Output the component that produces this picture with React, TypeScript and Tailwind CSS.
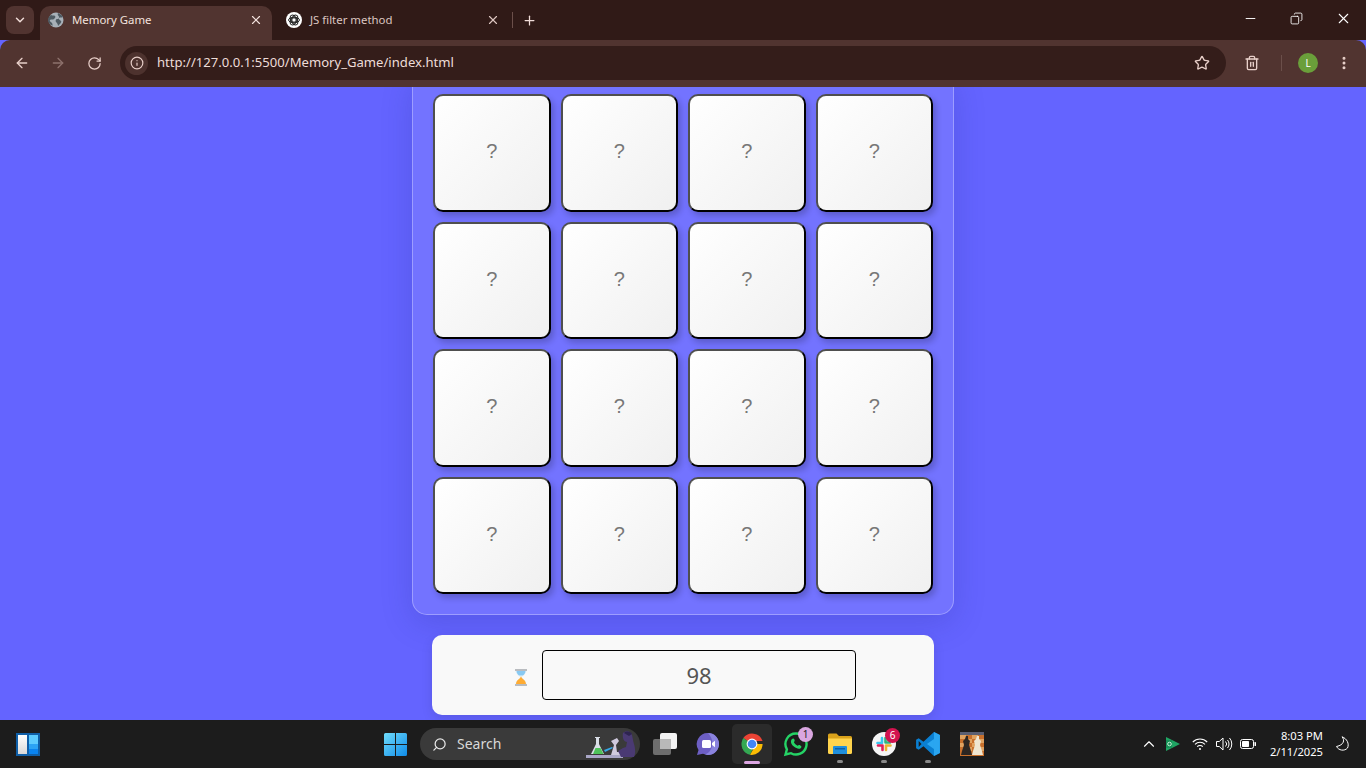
import { ArrowLeft, ArrowRight, ChevronDown, ChevronUp, Copy, Ellipsis, Info, Minus, Plus, RotateCw, Search, Star, Trash2, X } from "lucide-react";

const rows = [0, 1, 2, 3];
const cols = [0, 1, 2, 3];

function Card() {
  return (
    <div className="aspect-square rounded-[10px] border-2 border-[#4f4f4f] border-r-black border-b-black bg-linear-to-br from-white to-[#f0f0f0] shadow-[3px_4px_6px_rgba(0,0,0,0.2)] flex items-center justify-center pb-[3px] text-[20px] text-[#777] font-['Liberation_Sans',sans-serif]">
      ?
    </div>
  );
}

function GlobeIcon() {
  return (
    <svg width="16" height="16" viewBox="0 0 16 16">
      <circle cx="8" cy="8" r="7.5" fill="#a7b0b8" />
      <path d="M3 3c2 1 3 0 4 1s0 2-1 3-3 0-4 1 1 2 2 3 0 3 1 3c-3-1-5-3-5-6 0-2 1-4 3-5zM10 1c2 1 4 2 5 4-2 1-3 0-4 1s1 2 2 3-1 3-3 5c0-2-1-3-2-4s0-3 1-3 2 0 2-2-2-1-1-4z" fill="#4e5a62" />
    </svg>
  );
}

function OpenAiIcon() {
  return (
    <svg width="16" height="16" viewBox="0 0 16 16">
      <circle cx="8" cy="8" r="8" fill="#fff" />
      <g fill="none" stroke="#222" strokeWidth="1">
        <circle cx="8" cy="8" r="2.2" />
        <ellipse cx="8" cy="8" rx="5.4" ry="2.8" />
        <ellipse cx="8" cy="8" rx="5.4" ry="2.8" transform="rotate(60 8 8)" />
        <ellipse cx="8" cy="8" rx="5.4" ry="2.8" transform="rotate(120 8 8)" />
      </g>
    </svg>
  );
}

function Hourglass() {
  return (
    <svg width="14" height="17" viewBox="0 0 14 17">
      <path d="M1.500 1h11c0 4.500-3.500 5.500-4.500 7.500 1 2 4.500 3 4.500 7.500h-11c0-4.500 3.500-5.500 4.500-7.500C5 6.500 1.500 5.500 1.500 1z" fill="#e6f3fb" />
      <path d="M2.500 2h9c0 2.500-1.500 3.500-2.500 4.500H5C4 5.500 2.500 4.500 2.500 2z" fill="#88c9f2" />
      <path d="M7 7c.4 3 4.800 3.500 5 8H2c.2-4.500 4.600-5 5-8z" fill="#ffac33" />
      <path d="M1 0h12v2H1zM1 15h12v2H1z" fill="#b9bcc0" />
    </svg>
  );
}

function WinLogo() {
  return (
    <svg width="23" height="23" viewBox="0 0 23 23">
      <defs>
        <linearGradient id="w" x1="0" y1="0" x2="1" y2="1">
          <stop offset="0" stopColor="#6fdcfb" />
          <stop offset="1" stopColor="#0f8be8" />
        </linearGradient>
      </defs>
      <path d="M0 1.500A1.500 1.500 0 0 1 1.500 0H11v11H0zM12 0h9.500A1.500 1.500 0 0 1 23 1.500V11H12zM0 12h11v11H1.500A1.500 1.500 0 0 1 0 21.500zM12 12h11v9.500a1.500 1.500 0 0 1-1.500 1.500H12z" fill="url(#w)" />
    </svg>
  );
}

function Scientist() {
  return (
    <svg width="54" height="32" viewBox="0 0 54 32">
      <path d="M1 27h37v3H1z" fill="#a9a6c6" />
      <path d="M10 9h5v1h-1v6l5 10H6l5-10v-6h-1z" fill="#d9dde6" />
      <path d="M8 26l2.500-6h5l3 6z" fill="#4ec25a" />
      <path d="M19 22l8-3 1 1-8 4z" fill="#35a8e8" />
      <path d="M26 13l6-3 2 3-3 4 1 7h3v3h-9l3-10z" fill="#cfc9dd" />
      <path d="M38 5c3-3 8-2 9 2s1 6 2 9 2 9 0 13H36l-3-6 5-3 3-1 1-5c-3 0-5-4-4-9z" fill="#4a3a73" />
      <path d="M39 5c2-2 6-2 8 1l-3 2z" fill="#2e2450" />
    </svg>
  );
}

function TaskView() {
  return (
    <svg width="26" height="24" viewBox="0 0 26 24">
      <rect x="1" y="7" width="18" height="16" rx="2" fill="#6d6d6d" />
      <rect x="8" y="1" width="17" height="16" rx="2" fill="#f4f4f4" />
      <rect x="8" y="7" width="11" height="10" fill="#b9b9b9" />
    </svg>
  );
}

function MeetIcon() {
  return (
    <svg width="24" height="24" viewBox="0 0 24 24">
      <path d="M12 1a11 11 0 1 1-5 20.800L1 23l1.500-5A11 11 0 0 1 12 1z" fill="#6d5fc4" />
      <path d="M12 1a11 11 0 0 1 0 22 11 11 0 0 1-3-.4C16 20 20 10 12 1z" fill="#8a83de" />
      <rect x="6" y="8" width="9" height="8" rx="1.500" fill="#fff" />
      <path d="M16 11l3-2.200v6.400L16 13z" fill="#fff" />
    </svg>
  );
}

function ChromeIcon() {
  return (
    <svg width="24" height="24" viewBox="0 0 24 24">
      <path d="M12 12L3.300 6A11 11 0 0 1 22.600 9H12z" fill="#ea4335" />
      <path d="M12 12L3.300 6A11 11 0 0 0 10 22.800l4-8z" fill="#34a853" />
      <path d="M12 12h10.600A11 11 0 0 1 10 22.800l5-8.500z" fill="#fbbc04" />
      <circle cx="12" cy="12" r="5.400" fill="#fff" />
      <circle cx="12" cy="12" r="4.300" fill="#4285f4" />
    </svg>
  );
}

function WhatsAppIcon() {
  return (
    <svg width="26" height="26" viewBox="0 0 26 26">
      <path d="M13 2.500a10.500 10.500 0 1 1-5 19.700L2.500 23.500l1.400-5.200A10.500 10.500 0 0 1 13 2.500z" fill="none" stroke="#25d366" strokeWidth="2.400" />
      <path d="M9 8c1-1 2-.6 2.400.6.500 1.200.300 1.700-.5 2.700.8 1.500 2 2.700 3.700 3.500 1-.9 1.500-1.100 2.700-.4 1.200.6 1.500 1.500.6 2.500-1.600 1.600-4.300.9-7-1.300C8 13.600 7 10 9 8z" fill="#25d366" />
    </svg>
  );
}

function FolderIcon() {
  return (
    <svg width="24" height="22" viewBox="0 0 24 22">
      <path d="M0 2a1.500 1.500 0 0 1 1.500-1.500h7L11 3h11.500A1.500 1.500 0 0 1 24 4.500V8H0z" fill="#d9a21b" />
      <path d="M0 5.500h24v14a1.500 1.500 0 0 1-1.500 1.500h-21A1.500 1.500 0 0 1 0 19.500z" fill="#ffd44d" />
      <path d="M5 14a1 1 0 0 1 1-1h12a1 1 0 0 1 1 1v7H5z" fill="#1f8fdc" />
      <path d="M7 15h10v1.500H7z" fill="#0b5fa8" />
    </svg>
  );
}

function SlackIcon() {
  return (
    <svg width="24" height="24" viewBox="0 0 24 24">
      <circle cx="12" cy="12" r="12" fill="#f5f5f5" />
      <g strokeWidth="2.600" strokeLinecap="round">
        <path d="M10 6v5M5.500 11H10" stroke="#36c5f0" />
        <path d="M18 10.500h-4.500M13.500 6v4.500" stroke="#2eb67d" />
        <path d="M14 18v-4.500M18.500 13.500H14" stroke="#ecb22e" />
        <path d="M6 13.500h4.500M10.500 13.500V18" stroke="#e01e5a" />
      </g>
    </svg>
  );
}

function VsCodeIcon() {
  return (
    <svg width="26" height="26" viewBox="0 0 24 24">
      <path d="M17.500 1L23 3.600v16.800L17.500 23 7.800 14l-4.400 3.400L1 16V8l2.400-1.400L7.800 10z" fill="#0a7fd1" />
      <path d="M17.500 1L23 3.600v16.800L17.500 23zM17.500 7.300L11 12l6.500 4.700z" fill="#2aa6f0" />
      <path d="M3.400 9.200L6 12l-2.600 2.800z" fill="#1c1c1c" />
    </svg>
  );
}

function ChessThumb() {
  return (
    <svg width="24" height="24" viewBox="0 0 24 24">
      <rect width="24" height="24" fill="#c8702c" />
      <path d="M0 3h6v4H0zM12 3h6v4h-6zM6 7h6v4H6zM18 7h6v4h-6zM0 11h6v4H0zM12 11h6v4h-6zM6 15h6v4H6zM18 15h6v4h-6z" fill="#e0a260" />
      <path d="M0 0h24v3H0z" fill="#5b5f72" />
      <path d="M6 4h2v3l2 2-1 4 2 6 1 4H1l1-4 2-6-1-4 2-2z" fill="#2c2622" />
      <path d="M17 4h2v3l2 2-1 4 2 6 1 4H12l1-4 2-6-1-4 2-2z" fill="#efe6d2" />
    </svg>
  );
}

function WifiIcon() {
  return (
    <svg width="16" height="14" viewBox="0 0 16 14" fill="none" stroke="#fff" strokeWidth="1.100">
      <path d="M.8 5a10 10 0 0 1 14.400 0M3 7.400a7 7 0 0 1 10 0M5.200 9.700a4 4 0 0 1 5.600 0" />
      <circle cx="8" cy="12" r="1" fill="#fff" stroke="none" />
    </svg>
  );
}

function VolumeIcon() {
  return (
    <svg width="17" height="14" viewBox="0 0 17 14" fill="none" stroke="#fff" strokeWidth="1">
      <path d="M.5 4.500h2.800L7 1v12L3.300 9.500H.5z" />
      <path d="M9.500 4.500a3.500 3.500 0 0 1 0 5M11.500 3a6 6 0 0 1 0 8M13.500 1a9 9 0 0 1 0 12" />
    </svg>
  );
}

function BatteryIcon() {
  return (
    <svg width="16" height="10" viewBox="0 0 16 10">
      <rect x=".5" y=".5" width="13" height="9" rx="2" fill="none" stroke="#fff" />
      <rect x="2" y="2" width="7" height="6" rx=".8" fill="#fff" />
      <rect x="14.500" y="3" width="1.500" height="4" rx=".6" fill="#fff" />
    </svg>
  );
}

function MoonIcon() {
  return (
    <svg width="14" height="16" viewBox="0 0 14 16" fill="none" stroke="#fff" strokeWidth="1">
      <path d="M7 .8C10 4 9 9 1.500 10.500c2 4 8 5 11 1.500C14.500 8 12 2.500 7 .8z" />
    </svg>
  );
}

function TrayPlay() {
  return (
    <svg width="14" height="14" viewBox="0 0 14 14">
      <path d="M0 0l14 7-14 7z" fill="#1fa463" />
      <rect x="0" y="3" width="6" height="8" fill="#169056" />
      <circle cx="3.500" cy="7" r="1.800" fill="none" stroke="#c9f2d8" />
    </svg>
  );
}

function Badge({ text, color, textColor }: { text: string; color: string; textColor: string }) {
  return (
    <span className={`absolute -top-[4px] -right-[4px] w-[15px] h-[15px] rounded-full ${color} ${textColor} text-[10px] leading-[15px] text-center`}>
      {text}
    </span>
  );
}

export default function App() {
  return (
    <div className="w-[1366px] h-[768px] overflow-hidden flex flex-col bg-[#6464ff] font-['Noto_Sans',sans-serif]">
      <div className="h-[40px] shrink-0 bg-[#301a17] flex items-end pl-[6px]">
        <div className="mb-[6px] w-[28px] h-[28px] rounded-lg bg-[#513430] flex items-center justify-center text-[#f0dcd8]">
          <ChevronDown size={14} strokeWidth={2.5} />
        </div>
        <div className="ml-[6px] w-[232px] h-[34px] rounded-t-[10px] bg-[#513430] flex items-center pl-[8px] pr-[9px] pb-[6px] text-[#f3e2de]">
          <GlobeIcon />
          <span className="ml-[8px] text-[11.4px]">Memory Game</span>
          <X size={14} className="ml-auto" />
        </div>
        <div className="w-[240px] h-[34px] flex items-center pl-[14px] pr-[12px] pb-[6px] text-[#dcc6c1]">
          <OpenAiIcon />
          <span className="ml-[8px] text-[11.4px]">JS filter method</span>
          <X size={14} className="ml-auto" />
        </div>
        <div className="mb-[12px] w-px h-[16px] bg-[#6b4f4a]" />
        <Plus size={15} strokeWidth={2} className="mb-[12px] ml-[9px] text-[#f0dcd8]" />
        <div className="ml-auto mb-[13px] flex items-center text-white">
          <Minus size={15} strokeWidth={1.5} className="mr-[32px]" />
          <Copy size={13} strokeWidth={1.6} className="mr-[32px] -scale-x-100" />
          <X size={17} strokeWidth={1.5} className="mr-[14px]" />
        </div>
      </div>

      <div className="h-[47px] shrink-0 bg-[#513430] rounded-t-[10px] flex items-center px-[14px] pb-[1px] text-[#e8cfc9]">
        <ArrowLeft size={16} />
        <ArrowRight size={16} className="ml-[20px] text-[#8d716c]" />
        <RotateCw size={15} className="ml-[21px]" />
        <div className="ml-[18px] w-[1106px] h-[34px] rounded-full bg-[#341d1a] flex items-center pl-[5px] pr-[16px]">
          <span className="w-[23px] h-[23px] rounded-full bg-[#4d322e] flex items-center justify-center">
            <Info size={14} />
          </span>
          <span className="ml-[9px] text-[13.1px] text-[#eddcd8]">http://127.0.0.1:5500/Memory_Game/index.html</span>
          <Star size={16} className="ml-auto" />
        </div>
        <Trash2 size={16} className="ml-[18px]" />
        <div className="ml-[21px] w-px h-[16px] bg-[#6b4f4a]" />
        <span className="ml-[16px] w-[20px] h-[20px] rounded-full bg-[#6a9f3a] text-white text-[10px] flex items-center justify-center">L</span>
        <Ellipsis size={16} strokeWidth={2.5} className="ml-[18px] rotate-90" />
      </div>

      <main className="flex-1 min-h-0 overflow-hidden flex flex-col items-center justify-end pb-[5px]">
        <div className="shrink-0 w-[542px] p-[20px] rounded-[15px] border border-white/30 bg-white/10 shadow-[0_8px_32px_rgba(31,38,135,0.2)]">
          <div className="grid grid-cols-4 gap-[10px]">
            {rows.map((r) => cols.map((c) => <Card key={`${r}-${c}`} />))}
          </div>
        </div>
        <div className="shrink-0 mt-[20px] w-[502px] h-[80px] rounded-[10px] bg-[#f9f9f9] shadow-[0_4px_12px_rgba(0,0,0,0.1)] flex items-center justify-center gap-[14px] pl-[4px]">
          <span className="mt-[4px]">
            <Hourglass />
          </span>
          <div className="w-[314px] h-[50px] rounded-[4px] border border-black flex items-center justify-center text-[22px] text-[#555]">
            98
          </div>
        </div>
      </main>

      <footer className="h-[48px] shrink-0 bg-[#1c1c1c] flex items-center text-white">
        <div className="ml-[16px] w-[24px] h-[23px] bg-[#0f5fa8] p-[2px] flex gap-[2px]">
          <div className="w-[9px] bg-linear-to-b from-white to-[#d8d8d8]" />
          <div className="flex-1 flex flex-col">
            <div className="flex-1 bg-[#5ccbff]" />
            <div className="h-[5px] bg-[#2ba3f5]" />
            <div className="h-[5px] bg-[#0a84f0]" />
          </div>
        </div>
        <div className="ml-[344px]">
          <WinLogo />
        </div>
        <div className="ml-[13px] w-[220px] h-[32px] rounded-full bg-[#3a3a3a] flex items-center pl-[12px]">
          <Search size={15} className="-scale-x-100 text-[#e8e8e8]" />
          <span className="ml-[10px] mb-[2px] text-[14px] text-[#d8d8d8]">Search</span>
          <span className="ml-auto mr-[1px] h-[32px]">
            <Scientist />
          </span>
        </div>
        <div className="ml-[12px]">
          <TaskView />
        </div>
        <div className="ml-[18px]">
          <MeetIcon />
        </div>
        <div className="ml-[12px] relative w-[40px] h-[40px] rounded-[5px] bg-[#2b2b2b] flex items-center justify-center">
          <ChromeIcon />
          <span className="absolute bottom-0 left-[12px] w-[16px] h-[3px] rounded-full bg-[#dca6e2]" />
        </div>
        <div className="ml-[11px] relative">
          <WhatsAppIcon />
          <Badge text="1" color="bg-[#d9a6e0]" textColor="text-[#222]" />
        </div>
        <div className="ml-[19px] relative">
          <FolderIcon />
          <span className="absolute -bottom-[8px] left-[9px] w-[6px] h-[3px] rounded-full bg-[#8a8a8a]" />
        </div>
        <div className="ml-[20px] relative">
          <SlackIcon />
          <Badge text="6" color="bg-[#d3134f]" textColor="text-white" />
          <span className="absolute -bottom-[7px] left-[9px] w-[6px] h-[3px] rounded-full bg-[#8a8a8a]" />
        </div>
        <div className="ml-[19px] relative">
          <VsCodeIcon />
          <span className="absolute -bottom-[6px] left-[10px] w-[6px] h-[3px] rounded-full bg-[#8a8a8a]" />
        </div>
        <div className="ml-[19px]">
          <ChessThumb />
        </div>

        <ChevronUp size={18} strokeWidth={1.5} className="ml-[156px]" />
        <div className="ml-[8px]">
          <TrayPlay />
        </div>
        <div className="ml-[12px]">
          <WifiIcon />
        </div>
        <div className="ml-[8px]">
          <VolumeIcon />
        </div>
        <div className="ml-[7px]">
          <BatteryIcon />
        </div>
        <div className="ml-[7px] w-[60px] text-right text-[11.2px] leading-[16px]">
          <div>8:03 PM</div>
          <div>2/11/2025</div>
        </div>
        <div className="ml-[12px]">
          <MoonIcon />
        </div>
      </footer>
    </div>
  );
}
